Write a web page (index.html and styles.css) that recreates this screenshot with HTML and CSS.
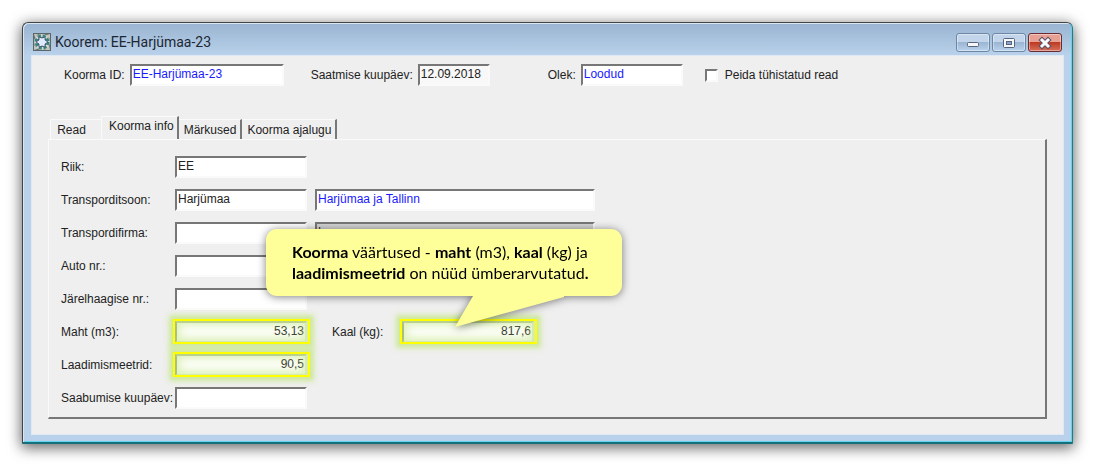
FILE: index.html
```html
<!DOCTYPE html>
<html lang="et">
<head>
    <meta charset="UTF-8">
    <meta name="viewport" content="width=device-width, initial-scale=1.0">
    <title>Koorem: EE-Harjümaa-23</title>
    <link rel="stylesheet" href="styles.css">
</head>
<body>
    <div class="window">
        <header class="titlebar">
            <svg class="app-icon" viewBox="0 0 18 18">
                <rect width="18" height="18" fill="#59666a"/>
                <path d="M1 1h4l-3 4zM17 1v5l-4-4zM1 17v-5l4 4zM17 17h-5l4-5z" fill="#c9c4ba"/>
                <circle cx="9" cy="9" r="6.5" fill="none" stroke="#d8d6cf" stroke-width="3"/>
                <circle cx="9" cy="9" r="6" fill="none" stroke="#37857f" stroke-width="3" stroke-dasharray="3 1.7"/>
                <path d="M6 4l3 1 3-1v3l3 2-3 2v3l-3-1-3 1v-3l-3-2 3-2z" fill="#dfeaff" stroke="#37506a" stroke-width=".8"/>
            </svg>
            <h1 class="title">Koorem: EE-Harjümaa-23</h1>
            <div class="window-buttons">
                <button class="window-button" type="button" aria-label="Minimeeri">
                    <svg viewBox="0 0 32 17"><rect x="10.5" y="8.5" width="11" height="4" rx="1" fill="#f7f7f7" stroke="#56657f"/></svg>
                </button>
                <button class="window-button" type="button" aria-label="Maksimeeri">
                    <svg viewBox="0 0 32 17">
                        <rect x="10.5" y="4.5" width="11" height="9" rx="1" fill="#f7f7f7" stroke="#56657f"/>
                        <rect x="13.5" y="7.5" width="5" height="3" fill="#8aa5c8" stroke="#56657f"/>
                    </svg>
                </button>
                <button class="window-button close" type="button" aria-label="Sulge">
                    <svg viewBox="0 0 32 17">
                        <path d="M13 6l6 6M19 6l-6 6" stroke="#5a5068" stroke-width="5" stroke-linecap="square"/>
                        <path d="M13 6l6 6M19 6l-6 6" stroke="#fafafa" stroke-width="3" stroke-linecap="square"/>
                    </svg>
                </button>
            </div>
        </header>

        <main class="client">
            <div class="summary">
                <div class="pair">
                    <label for="load-id">Koorma ID:</label>
                    <input class="field id blue" id="load-id" type="text" value="EE-Harjümaa-23">
                </div>
                <div class="pair">
                    <label for="ship-date">Saatmise kuupäev:</label>
                    <input class="field date" id="ship-date" type="text" value="12.09.2018">
                </div>
                <div class="pair status">
                    <label for="status">Olek:</label>
                    <input class="field state blue" id="status" type="text" value="Loodud">
                </div>
                <div class="pair">
                    <input class="check" id="hide-rows" type="checkbox">
                    <label for="hide-rows">Peida tühistatud read</label>
                </div>
            </div>

            <nav class="tabs" role="tablist">
                <button class="tab first" type="button" role="tab">Read</button>
                <button class="tab active" type="button" role="tab" aria-selected="true">Koorma info</button>
                <button class="tab" type="button" role="tab">Märkused</button>
                <button class="tab" type="button" role="tab">Koorma ajalugu</button>
            </nav>

            <section class="panel">
                <div class="row">
                    <label for="country">Riik:</label>
                    <input class="field" id="country" type="text" value="EE">
                </div>
                <div class="row">
                    <label for="zone">Transporditsoon:</label>
                    <input class="field" id="zone" type="text" value="Harjümaa">
                    <input class="field wide blue" type="text" value="Harjümaa ja Tallinn" aria-label="Transporditsooni nimi">
                </div>
                <div class="row">
                    <label for="carrier">Transpordifirma:</label>
                    <input class="field" id="carrier" type="text">
                    <input class="field wide off" type="text" value="|" aria-label="Transpordifirma nimi">
                </div>
                <div class="row">
                    <label for="truck">Auto nr.:</label>
                    <input class="field" id="truck" type="text">
                </div>
                <div class="row">
                    <label for="trailer">Järelhaagise nr.:</label>
                    <input class="field" id="trailer" type="text">
                </div>
                <div class="row">
                    <label for="volume">Maht (m3):</label>
                    <span class="marked"><input class="field number" id="volume" type="text" value="53,13"></span>
                    <label class="second" for="weight">Kaal (kg):</label>
                    <span class="marked"><input class="field number" id="weight" type="text" value="817,6"></span>
                </div>
                <div class="row">
                    <label for="meters">Laadimismeetrid:</label>
                    <span class="marked"><input class="field number" id="meters" type="text" value="90,5"></span>
                </div>
                <div class="row">
                    <label for="arrival">Saabumise kuupäev:</label>
                    <input class="field" id="arrival" type="text">
                </div>

                <div class="callout">
                    <p><b>Koorma</b> väärtused - <b>maht</b> (m3), <b>kaal</b> (kg) ja<br><b>laadimismeetrid</b> on nüüd ümberarvutatud<b>.</b></p>
                    <svg class="tail" viewBox="0 0 110 32"><path d="M19 0H110V1L1 31Z" fill="#feff99"/></svg>
                </div>
            </section>
        </main>
    </div>
</body>
</html>
```
FILE: styles.css
```css
* {
    box-sizing: border-box;
}
body {
    margin: 0;
    padding: 22px;
    background: white;
    color: #222;
    font-family: "Liberation Sans", Arial, sans-serif;
    font-size: 12px;
}
.window {
    padding: 0 8px 7px;
    border: 1px solid #444;
    border-right-color: #147f8d;
    border-bottom: 2px solid #14717b;
    border-radius: 6px 6px 1px 1px;
    background: linear-gradient(#99b4d1, #b9d1ea 32px, #b9d1ea);
    box-shadow: inset 1px 1px 0 #d9e7f5, inset -1px -1px 0 #63d3ec, 0 3px 14px 1px rgba(0, 0, 0, 0.6);
}
.titlebar {
    display: flex;
    align-items: center;
    height: 32px;
    padding: 6px 2px 0;
}
.app-icon {
    width: 18px;
    height: 18px;
}
.title {
    flex: 1;
    margin: 0 0 0 4px;
    color: #1c2733;
    font: 14px/20px Roboto, sans-serif;
}
.window-buttons {
    display: flex;
    gap: 2px;
}
.window-button {
    width: 34px;
    height: 19px;
    padding: 0;
    border: 1px solid #6d87a8;
    border-radius: 3px;
    background: linear-gradient(#c3d5ea 45%, #9bb6d3 50%, #b9d2ec);
    box-shadow: inset 0 0 0 1px rgba(255, 255, 255, 0.4);
}
.window-button svg {
    display: block;
    width: 100%;
}
.window-button.close {
    border-color: #6b2b33;
    background: linear-gradient(#e6a194 45%, #be3a22 50%, #d6705a);
}
.client {
    padding: 8px 16px 15px;
    border: 1px solid #dfe9f3;
    background: #efefef;
}
.summary {
    display: flex;
    gap: 27px;
    padding-left: 16px;
}
.pair {
    display: flex;
    align-items: center;
    gap: 5px;
}
.pair.status {
    margin-left: 31px;
    margin-right: -5px;
}
.field {
    width: 132px;
    height: 22px;
    padding: 0 1px 2px;
    border: 2px solid #777;
    border-right-color: #fafafa;
    border-bottom-color: #fafafa;
    border-radius: 0;
    background: white;
    color: #222;
    font: inherit;
}
.field.id {
    width: 154px;
}
.field.date {
    width: 72px;
    background: #f8f8f8;
}
.field.state {
    width: 102px;
}
.field.wide {
    width: 280px;
    margin-left: 8px;
}
.field.blue {
    color: #1a1aff;
}
.field.off {
    background: #d4d4d4;
}
.field.number {
    display: block;
    border-color: #aaba92 #e4eed4 #e4eed4 #8a9678;
    text-align: right;
}
.check {
    appearance: none;
    width: 13px;
    height: 13px;
    margin: 0 2px 0 0;
    border: 2px solid #777;
    border-right-color: #fafafa;
    border-bottom-color: #fafafa;
    background: white;
}
.tabs {
    display: flex;
    align-items: flex-end;
    height: 23px;
    margin-top: 30px;
    padding-left: 2px;
}
.tab {
    height: 20px;
    padding: 0 4px 0 5px;
    border: 0;
    border-top: 1px solid #fafafa;
    border-right: 2px solid #777;
    background: #efefef;
    color: #222;
    font: inherit;
}
.tab.first {
    width: 51px;
    padding-right: 14px;
    border-right: 0;
    border-left: 1px solid #fafafa;
}
.tab.active {
    height: 23px;
    padding: 0 3px 4px 7px;
    border-left: 1px solid #fafafa;
}
.panel {
    display: flex;
    flex-direction: column;
    gap: 11px;
    position: relative;
    padding: 16px 12px 8px;
    border: 1px solid #fafafa;
    border-right: 2px solid #777;
    border-bottom: 2px solid #777;
}
.row {
    display: flex;
    align-items: center;
    height: 22px;
}
.row label {
    width: 114px;
    white-space: nowrap;
}
.row .second {
    width: 70px;
    margin-left: 25px;
}
/* yellow frame with a green glow on both sides */
.marked {
    position: relative;
}
.marked::after {
    content: "";
    position: absolute;
    inset: -2px -3px -1px -2px;
    border: 2px solid #ffff00;
    box-shadow: 0 0 5px 4px rgba(200, 232, 140, 0.85), inset 0 0 8px 5px rgba(200, 232, 140, 0.6);
    pointer-events: none;
}
.callout {
    position: absolute;
    top: 89px;
    left: 217px;
    width: 356px;
    padding: 12px 0 13px 26px;
    border-radius: 11px;
    background: #feff99;
    color: black;
    font: 16px/21px Lato, sans-serif;
    white-space: nowrap;
    filter: drop-shadow(0 1px 4px rgba(0, 0, 0, 0.5));
}
.callout p {
    margin: 0;
}
.tail {
    position: absolute;
    top: 100%;
    left: 188px;
    width: 110px;
}
```
